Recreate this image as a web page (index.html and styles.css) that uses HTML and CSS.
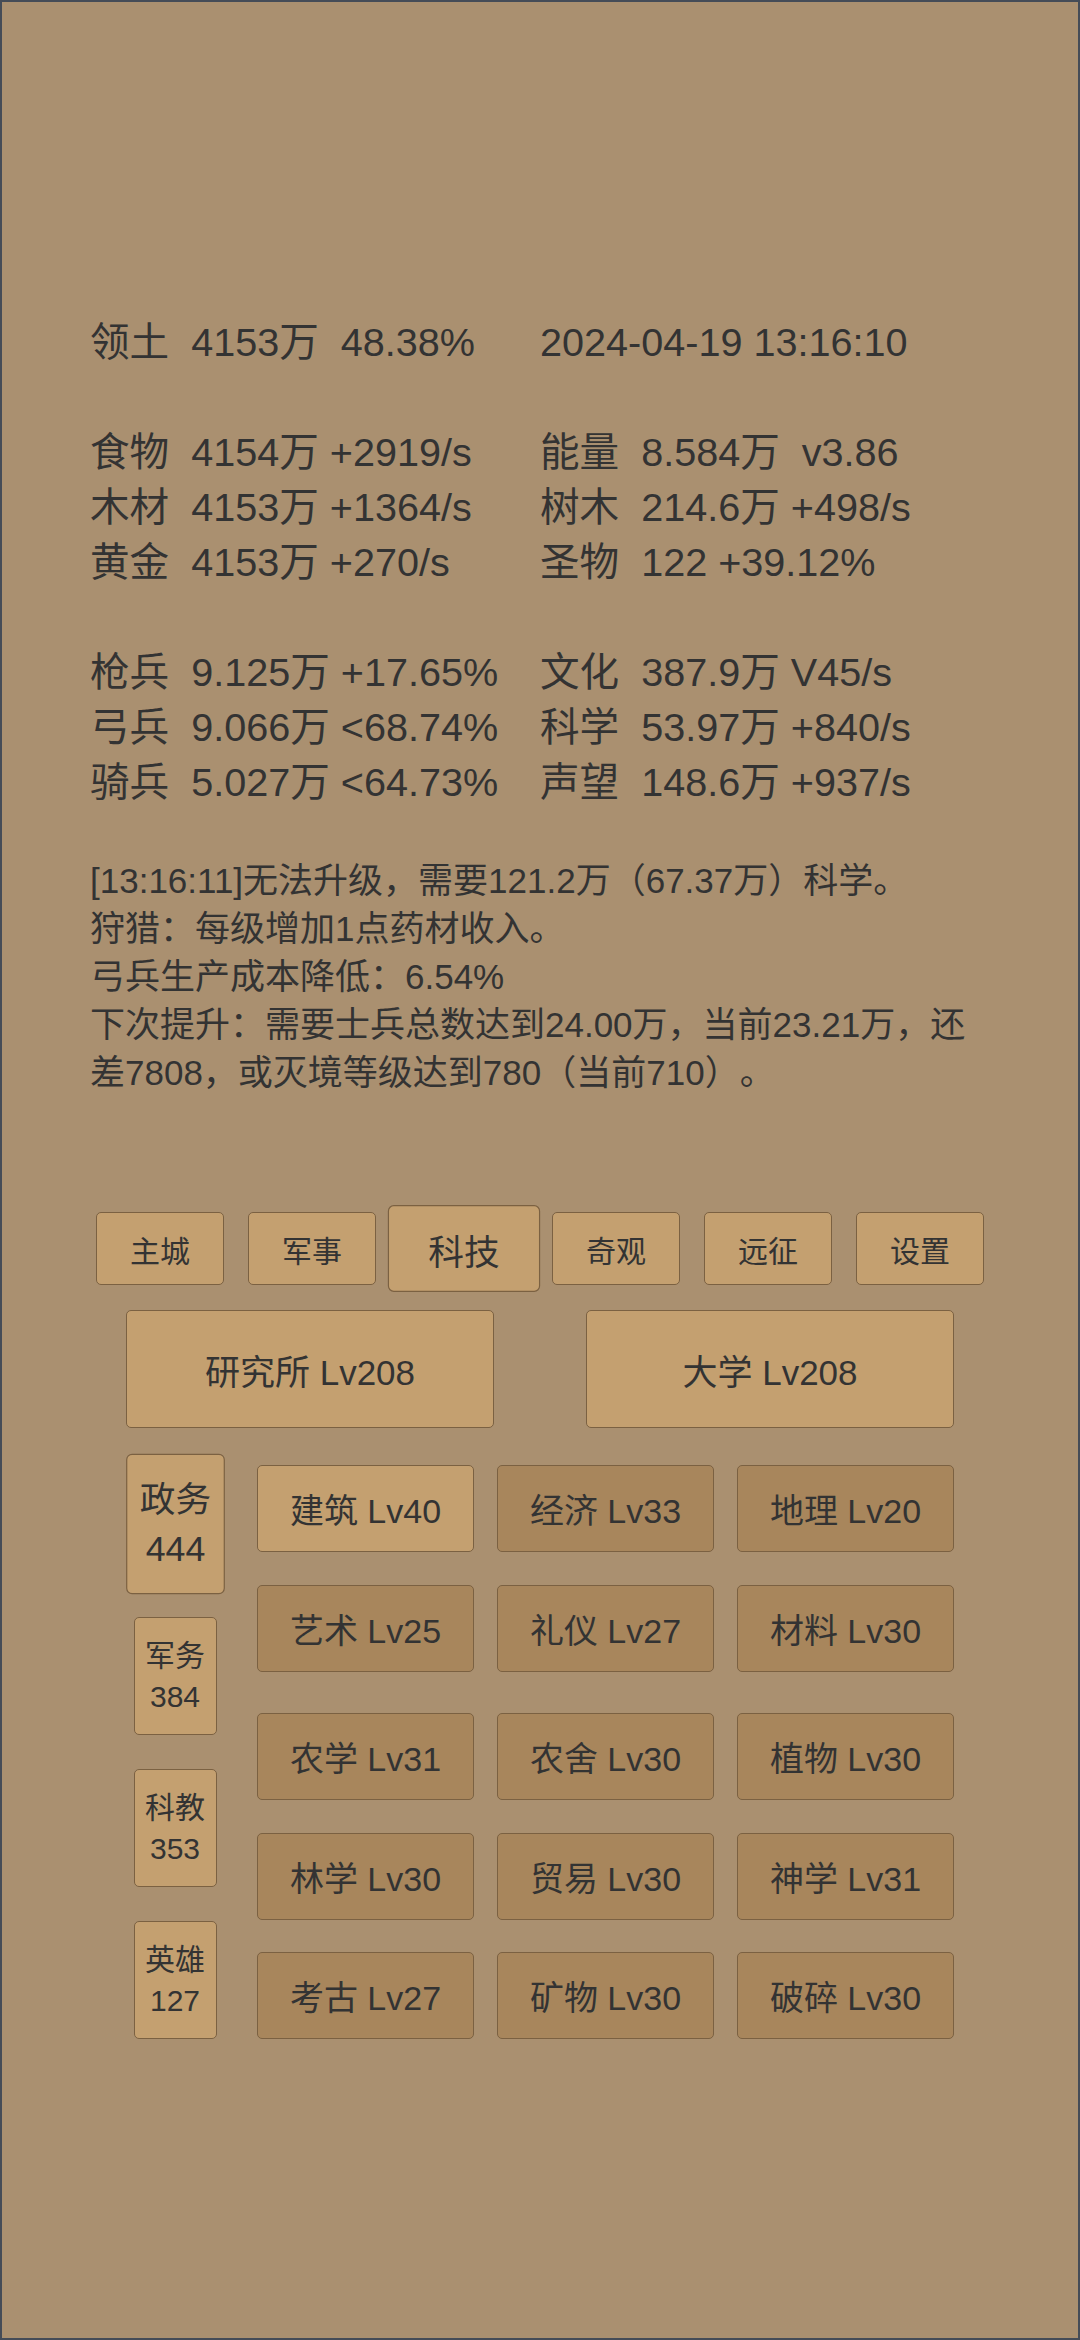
FILE: index.html
```html
<!DOCTYPE html>
<html lang="zh-CN">
<head>
<meta charset="utf-8">
<title>科技</title>
<link rel="stylesheet" href="styles.css">
</head>
<body>
<div class="screen">
  <div class="stats">
    <div class="cell">领土  4153万  48.38%</div>
    <div class="cell">2024-04-19 13:16:10</div>
    <div class="cell blank"></div>
    <div class="cell blank"></div>
    <div class="cell">食物  4154万 +2919/s</div>
    <div class="cell">能量  8.584万  v3.86</div>
    <div class="cell">木材  4153万 +1364/s</div>
    <div class="cell">树木  214.6万 +498/s</div>
    <div class="cell">黄金  4153万 +270/s</div>
    <div class="cell">圣物  122 +39.12%</div>
    <div class="cell blank"></div>
    <div class="cell blank"></div>
    <div class="cell">枪兵  9.125万 +17.65%</div>
    <div class="cell">文化  387.9万 V45/s</div>
    <div class="cell">弓兵  9.066万 &lt;68.74%</div>
    <div class="cell">科学  53.97万 +840/s</div>
    <div class="cell">骑兵  5.027万 &lt;64.73%</div>
    <div class="cell">声望  148.6万 +937/s</div>
  </div>

  <div class="log">
    <p>[13:16:11]无法升级，需要121.2万（67.37万）科学。</p>
    <p>狩猎：每级增加1点药材收入。</p>
    <p>弓兵生产成本降低：6.54%</p>
    <p>下次提升：需要士兵总数达到24.00万，当前23.21万，还差7808，或灭境等级达到780（当前710）。</p>
  </div>

  <div class="tabs">
    <div class="btn tab">主城</div>
    <div class="btn tab">军事</div>
    <div class="btn tab selected">科技</div>
    <div class="btn tab">奇观</div>
    <div class="btn tab">远征</div>
    <div class="btn tab">设置</div>
  </div>

  <div class="buildings">
    <div class="btn building">研究所 Lv208</div>
    <div class="btn building">大学 Lv208</div>
  </div>

  <div class="tech">
    <div class="side">
      <div class="btn cat selected">政务<br>444</div>
      <div class="btn cat">军务<br>384</div>
      <div class="btn cat">科教<br>353</div>
      <div class="btn cat">英雄<br>127</div>
    </div>
    <div class="grid">
      <div class="btn item active">建筑 Lv40</div>
      <div class="btn item">经济 Lv33</div>
      <div class="btn item">地理 Lv20</div>
      <div class="btn item">艺术 Lv25</div>
      <div class="btn item">礼仪 Lv27</div>
      <div class="btn item">材料 Lv30</div>
      <div class="btn item shifted">农学 Lv31</div>
      <div class="btn item shifted">农舍 Lv30</div>
      <div class="btn item shifted">植物 Lv30</div>
      <div class="btn item">林学 Lv30</div>
      <div class="btn item">贸易 Lv30</div>
      <div class="btn item">神学 Lv31</div>
      <div class="btn item">考古 Lv27</div>
      <div class="btn item">矿物 Lv30</div>
      <div class="btn item">破碎 Lv30</div>
    </div>
  </div>
</div>
</body>
</html>
```

FILE: styles.css
```css
* { box-sizing: border-box; }

html, body {
  margin: 0;
  padding: 0;
  background: #aa9070;
}

body {
  font-family: "Liberation Sans", "Noto Sans CJK SC", sans-serif;
  color: #333333;
  text-spacing-trim: space-all;
}

.screen {
  width: 1080px;
  height: 2340px;
  border: 2px solid #454c57;
  background: #aa9070;
  padding: 313px 88px 0 88px;
  overflow: hidden;
}

.stats {
  display: grid;
  grid-template-columns: 450px 450px;
  grid-auto-rows: 55px;
  font-size: 39.6px;
  line-height: 55px;
}

.cell {
  white-space: pre;
}

.log {
  margin-top: 47px;
  font-size: 35px;
  line-height: 48px;
  text-spacing-trim: space-all;
}

.log p {
  margin: 0;
}

.btn {
  display: flex;
  align-items: center;
  justify-content: center;
  text-align: center;
  background: #c4a070;
  border: 1px solid #7b6142;
  border-radius: 5px;
  color: #333333;
}

.selected {
  transform: scale(1.19);
}

.tabs {
  margin-top: 115px;
  display: flex;
  justify-content: center;
  gap: 24px;
}

.tab {
  width: 128px;
  height: 73px;
  font-size: 30px;
}

.buildings {
  margin-top: 25px;
  display: flex;
  justify-content: center;
  gap: 92px;
}

.building {
  width: 368px;
  height: 118px;
  font-size: 35px;
}

.tech {
  margin: 37px auto 0 auto;
  width: 828px;
  display: flex;
  gap: 33px;
  align-items: flex-start;
}

.side {
  width: 98px;
  display: flex;
  flex-direction: column;
  align-items: center;
  gap: 34px;
}

.cat {
  width: 83px;
  height: 118px;
  font-size: 30px;
  line-height: 41px;
}

.grid {
  display: grid;
  grid-template-columns: repeat(3, 217px);
  column-gap: 23px;
  row-gap: 32.5px;
}

.item {
  height: 87px;
  font-size: 34px;
  background: #a8865c;
}

.item.active {
  background: #c4a070;
}

.item.shifted {
  margin-top: 9px;
}
```
